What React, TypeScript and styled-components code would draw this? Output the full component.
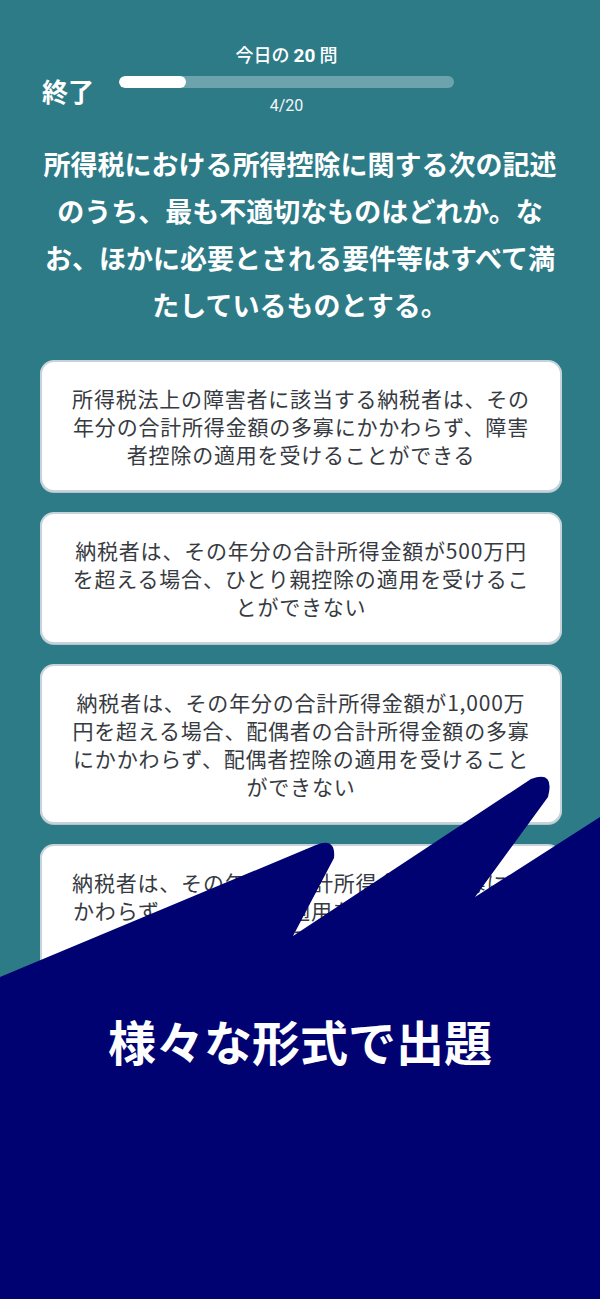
import React from 'react';
import styled, { createGlobalStyle } from 'styled-components';

const TEAL = '#2e7b88';
const NAVY = '#000272';

const GlobalStyle = createGlobalStyle`
  html, body {
    margin: 0;
    padding: 0;
    background: ${TEAL};
  }
  body {
    font-family: "Noto Sans CJK JP", "Noto Sans", sans-serif;
  }
`;

const Screen = styled.div`
  position: relative;
  width: 600px;
  height: 1299px;
  overflow: hidden;
  background: ${TEAL};
`;

const Header = styled.header`
  display: flex;
  align-items: center;
  padding: 42px 0 0 42px;
  gap: 25px;
`;

const QuitButton = styled.button`
  border: none;
  background: none;
  padding: 0;
  margin-top: 24px;
  font-family: inherit;
  font-size: 26px;
  font-weight: 700;
  line-height: 30px;
  color: #fff;
`;

const Progress = styled.div`
  display: flex;
  flex-direction: column;
  align-items: center;
  width: 335px;
`;

const DailyTitle = styled.div`
  font-size: 18px;
  font-weight: 500;
  line-height: 25px;
  color: #fff;
  margin-bottom: 8px;

  b {
    font-family: "Roboto", "Noto Sans", sans-serif;
    font-size: 19px;
    font-weight: 700;
    margin: 0 4px;
  }
`;

const Track = styled.div`
  width: 100%;
  height: 12px;
  border-radius: 6px;
  background: rgba(255, 255, 255, 0.3);
  overflow: hidden;
`;

const Fill = styled.div`
  height: 100%;
  border-radius: 6px;
  background: #fff;
`;

const Count = styled.div`
  margin-top: 7px;
  font-family: "Roboto", "Noto Sans", sans-serif;
  font-size: 16px;
  line-height: 21px;
  color: #f2f6f7;
`;

const Question = styled.h1`
  margin: 24px 0 0;
  text-align: center;
  font-size: 27px;
  font-weight: 700;
  line-height: 47px;
  color: #fff;
`;

const Choices = styled.ul`
  list-style: none;
  margin: 32px 0 0;
  padding: 0 38px 0 40px;
  display: flex;
  flex-direction: column;
  gap: 20px;
`;

const Choice = styled.li`
  background: #fff;
  border: 2px solid #c6d3db;
  border-radius: 14px;
  box-shadow: 0 1px 0 #b3c2cb;
  padding: 22px 10px;
  text-align: center;
  font-size: 21px;
  letter-spacing: 0.8px;
  line-height: 28px;
  color: #363a41;
`;

const Banner = styled.div`
  position: absolute;
  left: 0;
  top: 770px;
  width: 600px;
  height: 529px;
  display: flex;
  justify-content: center;
  padding-top: 240px;
  box-sizing: border-box;
`;

const BannerShape = styled.svg`
  position: absolute;
  inset: 0;
`;

const BannerText = styled.div`
  position: relative;
  font-size: 48px;
  font-weight: 700;
  line-height: 60px;
  color: #fff;
`;

const lines = (text: string[]) =>
  text.map((t, i) => (
    <React.Fragment key={i}>
      {t}
      {i < text.length - 1 && <br />}
    </React.Fragment>
  ));

const choices = [
  ['所得税法上の障害者に該当する納税者は、その', '年分の合計所得金額の多寡にかかわらず、障害', '者控除の適用を受けることができる'],
  ['納税者は、その年分の合計所得金額が500万円', 'を超える場合、ひとり親控除の適用を受けるこ', 'とができない'],
  [
    '納税者は、その年分の合計所得金額が1,000万',
    '円を超える場合、配偶者の合計所得金額の多寡',
    'にかかわらず、配偶者控除の適用を受けること',
    'ができない',
  ],
  ['納税者は、その年分の合計所得金額の多寡にか', 'かわらず、基礎控除の適用を受けることができ', 'る'],
];

export default function App() {
  const answered = 4;
  const total = 20;

  return (
    <Screen>
      <GlobalStyle />
      <Header>
        <QuitButton>終了</QuitButton>
        <Progress>
          <DailyTitle>
            今日の<b>{total}</b>問
          </DailyTitle>
          <Track>
            <Fill style={{ width: `${(answered / total) * 100}%` }} />
          </Track>
          <Count>
            {answered}/{total}
          </Count>
        </Progress>
      </Header>

      <Question>
        {lines([
          '所得税における所得控除に関する次の記述',
          'のうち、最も不適切なものはどれか。な',
          'お、ほかに必要とされる要件等はすべて満',
          'たしているものとする。',
        ])}
      </Question>

      <Choices>
        {choices.map((c, i) => (
          <Choice key={i}>{lines(c)}</Choice>
        ))}
      </Choices>

      <Banner>
        <BannerShape width="600" height="529" viewBox="0 770 600 529">
          <path
            d="M0,977 L316,845 Q336,837 334,858 L293,936 L531,779 Q555,770 548,797 L475,897 L600,817 L600,1299 L0,1299 Z"
            fill={NAVY}
          />
        </BannerShape>
        <BannerText>様々な形式で出題</BannerText>
      </Banner>
    </Screen>
  );
}
